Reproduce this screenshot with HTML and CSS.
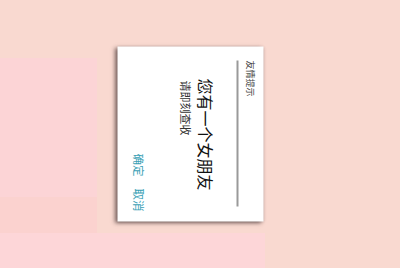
FILE: index.html
```html
<!DOCTYPE html>
<html lang="zh-CN">
<head>
<meta charset="utf-8">
<title>友情提示</title>
<link rel="stylesheet" href="styles.css">
</head>
<body>
<div class="stage">
  <div class="dialog">
    <div class="title">友情提示</div>
    <div class="divider"></div>
    <div class="message">您有一个女朋友</div>
    <div class="sub">请即刻查收</div>
    <div class="actions">
      <span class="btn">确定</span>
      <span class="btn">取消</span>
    </div>
  </div>
</div>
</body>
</html>
```
FILE: styles.css
```css
html, body {
  margin: 0;
  padding: 0;
}
body {
  width: 400px;
  height: 268px;
  overflow: hidden;
  font-family: "Noto Sans CJK SC", "Noto Sans", sans-serif;
  background-color: #f9d9d0;
  background-image:
    linear-gradient(#fcd4d6, #fcd4d6),
    linear-gradient(#fbd2cf, #fbd2cf),
    linear-gradient(#fdd6d8, #fdd6d8);
  background-size: 97px 139px, 97px 36px, 265px 35px;
  background-position: 0 58px, 0 197px, 0 233px;
  background-repeat: no-repeat;
}
.stage {
  width: 400px;
  height: 268px;
  display: flex;
  align-items: center;
  justify-content: center;
}
.dialog {
  width: 175px;
  height: 146px;
  margin-right: 20px;
  margin-bottom: 1px;
  background: #ffffff;
  transform: rotate(90deg);
  box-shadow: 1px 3px 4px rgba(50, 35, 35, 0.65), 0 0 3px rgba(50, 35, 35, 0.25);
  display: flex;
  flex-direction: column;
  box-sizing: border-box;
}
.title {
  font-size: 9px;
  line-height: 9px;
  color: #444;
  margin: 9px 0 0 14px;
}
.divider {
  height: 1.5px;
  background: #9a9a9a;
  margin: 7px 15px 0 14px;
}
.message {
  font-size: 16px;
  line-height: 16px;
  color: #111;
  margin: 23px 0 0 32px;
}
.sub {
  font-size: 11px;
  line-height: 11px;
  color: #333;
  margin: 7px 0 0 34px;
}
.actions {
  display: flex;
  justify-content: flex-end;
  gap: 12px;
  margin: 36px 10px 0 0;
}
.btn {
  font-size: 11.5px;
  line-height: 11px;
  color: #3a9fb5;
}
```
